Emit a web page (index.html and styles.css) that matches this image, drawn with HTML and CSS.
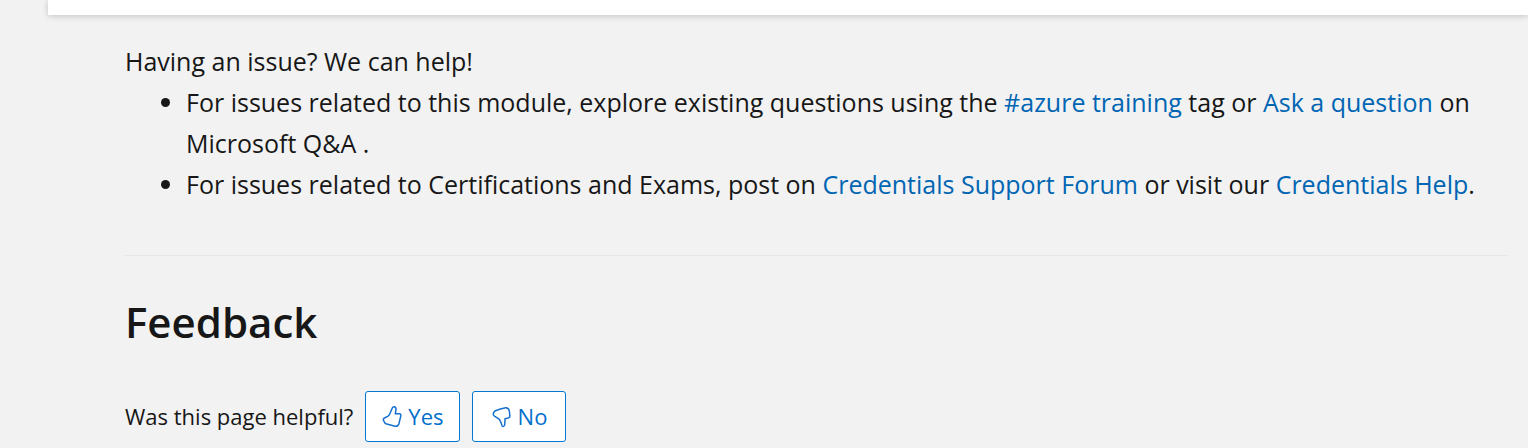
FILE: index.html
```
<!DOCTYPE html>
<html lang="en">
<head>
<meta charset="utf-8">
<title>Feedback</title>
<link rel="stylesheet" href="styles.css">
</head>
<body>
<div class="card"></div>
<main class="content">
  <section class="help">
    <p class="help-title">Having an issue? We can help!</p>
    <ul class="help-list">
      <li>For issues related to this module, explore existing questions using the <a href="#azure-training">#azure training</a> tag or <a href="#ask">Ask a question</a> on Microsoft Q&amp;A .</li>
      <li>For issues related to Certifications and Exams, post on <a href="#forum">Credentials Support Forum</a> or visit our <a href="#credentials-help">Credentials Help</a>.</li>
    </ul>
  </section>
  <section class="feedback">
    <h2 class="feedback-title">Feedback</h2>
    <div class="rating">
      <p class="rating-label">Was this page helpful?</p>
      <button class="button" type="button">
        <svg class="icon" viewBox="0 0 20 24" aria-hidden="true"><path d="M10.4 2.8Q11 1.5 12.3 1.8Q14.3 2.4 14 4.5L13.3 8.8H17.5Q19.2 9 18.8 10.8L17 18.5Q16 21.8 13 21.3L4 18.8Q2.8 18.4 2.3 17Q1.6 15.7 1.3 14.8Q1.2 13.6 2.4 13L5.6 11.4Q7 10.6 7.6 9.2Z"/></svg>
        <span>Yes</span>
      </button>
      <button class="button" type="button">
        <svg class="icon" viewBox="0 0 20 24" aria-hidden="true"><path d="M3.5 5.7Q2.4 6.2 1.8 7.5Q.8 8.7 1.7 10.3Q2.3 11.2 4 12.2L6.4 13.6Q7.8 14.6 8.5 16.4L10 20.5Q10.6 22 12 21Q12.8 20.4 12.8 18.8L13 13.8L16.3 13Q18 12.5 17.9 10.8L17.3 6Q16.8 2.6 13.6 2.7Q8.2 3.5 3.5 5.7Z"/></svg>
        <span>No</span>
      </button>
    </div>
  </section>
</main>
</body>
</html>
```
FILE: styles.css
```
* {
  box-sizing: border-box;
}

body {
  margin: 0;
  background: #f2f2f2;
  color: #171717;
  font-family: "Open Sans", "Noto Sans", sans-serif;
  font-size: 25px;
  font-weight: 500;
  line-height: 41px;
}

.card {
  margin-left: 48px;
  padding-top: 15px;
  background: #fff;
  box-shadow: 0 1px 6px rgba(0, 0, 0, 0.2);
}

.content {
  padding: 26px 20px 0 125px;
}

.help {
  padding-bottom: 50px;
  border-bottom: 1px solid #e6e6e6;
}

.help-title,
.rating-label {
  margin: 0;
}

.help-list {
  margin: 0;
  padding-left: 61px;
}

a {
  color: #0065b3;
  text-decoration: none;
}

.feedback-title {
  margin: 35px 0 39px;
  font-size: 42px;
  font-weight: 600;
  line-height: 61px;
}

.rating {
  display: flex;
  align-items: center;
  gap: 12px;
}

.rating-label {
  font-size: 22px;
}

.button {
  display: flex;
  align-items: center;
  justify-content: center;
  gap: 6px;
  min-width: 94px;
  padding: 4px 16px;
  border: 1px solid #0078d4;
  border-radius: 3px;
  background: #fff;
  color: #0070cc;
  font: inherit;
  font-size: 22px;
}

.icon {
  width: 20px;
  height: 24px;
  fill: none;
  stroke: #1670cf;
  stroke-width: 1.5;
  stroke-linejoin: round;
}
```
